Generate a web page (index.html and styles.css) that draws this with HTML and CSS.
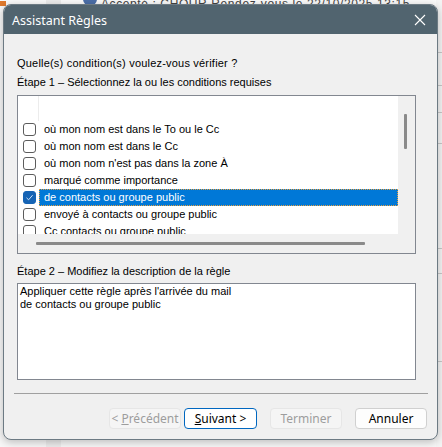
FILE: index.html
```html
<!DOCTYPE html>
<html lang="fr">
<head>
<meta charset="utf-8">
<title>Assistant Règles</title>
<link rel="stylesheet" href="styles.css">
</head>
<body>
<div class="desktop">
  <div class="behind">
    <div class="behind-top">
      <span class="orange-ico"></span>
      <span class="gray-col"></span>
      <span class="blue-ico"></span>
      <span class="behind-text">Accepté : CHOUR Rendez-vous le 22/10/2025 13:15</span>
    </div>
    <div class="behind-right">
      <span class="rl l1"></span><span class="rl l2"></span><span class="rl l3"></span><span class="rl l4"></span><span class="rl l5"></span><span class="rl l6"></span><span class="rl l7"></span>
    </div>
  </div>

  <div class="dialog">
    <div class="titlebar">
      <span class="title">Assistant Règles</span>
      <svg class="close" width="12" height="12" viewBox="0 0 12 12"><path d="M1 1L11 11M11 1L1 11" stroke="#ffffff" stroke-width="1.1" fill="none"/></svg>
    </div>
    <div class="content">
      <p class="question">Quelle(s) condition(s) voulez-vous vérifier ?</p>
      <p class="step">Étape 1 – Sélectionnez la ou les conditions requises</p>
      <div class="listbox">
        <div class="list-main">
          <div class="rows">
            <div class="blank-row"><span class="col-line"></span></div>
            <div class="row"><span class="cb"></span><span class="lbl">où mon nom est dans le To ou le Cc</span></div>
            <div class="row"><span class="cb"></span><span class="lbl">où mon nom est dans le Cc</span></div>
            <div class="row"><span class="cb"></span><span class="lbl">où mon nom n'est pas dans la zone À</span></div>
            <div class="row"><span class="cb"></span><span class="lbl">marqué comme importance</span></div>
            <div class="row selected"><span class="cb checked"><svg width="9" height="9" viewBox="0 0 9 9"><path d="M1.5 4.8L3.6 6.8L7.6 2.2" stroke="#cfe3f7" stroke-width="1" fill="none"/></svg></span><span class="lbl">de contacts ou groupe public</span></div>
            <div class="row"><span class="cb"></span><span class="lbl">envoyé à contacts ou groupe public</span></div>
            <div class="row"><span class="cb"></span><span class="lbl">Cc contacts ou groupe public</span></div>
          </div>
          <div class="vscroll"><span class="vthumb"></span></div>
        </div>
        <div class="hscroll"><span class="hthumb"></span></div>
      </div>
      <p class="step step2">Étape 2 – Modifiez la description de la règle</p>
      <div class="desc">
        <div>Appliquer cette règle après l'arrivée du mail</div>
        <div>de contacts ou groupe public</div>
      </div>
    </div>
    <div class="sep"></div>
    <div class="buttons">
      <button class="btn disabled" type="button">&lt; <u>P</u>récédent</button>
      <button class="btn default" type="button"><u>S</u>uivant &gt;</button>
      <button class="btn disabled gap" type="button">Terminer</button>
      <button class="btn gap" type="button">Annuler</button>
    </div>
  </div>
</div>
</body>
</html>
```

FILE: styles.css
```css
* { box-sizing: border-box; }
html, body { margin: 0; padding: 0; }
body {
  width: 442px;
  height: 447px;
  overflow: hidden;
  background: #f7f7f7;
  font-family: "Liberation Sans", Arial, sans-serif;
}
.desktop {
  position: relative;
  width: 442px;
  height: 447px;
  padding: 4px 0 0 3px;
}
.behind {
  position: absolute;
  left: 0; top: 0;
  width: 442px; height: 447px;
}
.behind-top {
  position: absolute;
  left: 0; top: 0;
  width: 442px; height: 12px;
  background: #fafafa;
}
.orange-ico {
  position: absolute; left: 0; top: 1px;
  width: 6px; height: 5px;
  background: #e07a2e;
}
.gray-col {
  position: absolute; left: 46px; top: 0;
  width: 15px; height: 447px;
  background: #ececec;
}
.blue-ico {
  position: absolute; left: 83px; top: -8px;
  width: 14px; height: 14px;
  border-radius: 50%;
  background: #4a6ea8;
}
.behind-text {
  position: absolute; left: 101px; top: -3px;
  font-size: 12px;
  color: #444;
  white-space: nowrap;
  letter-spacing: 0.6px;
}
.behind-right {
  position: absolute;
  left: 436px; top: 0;
  width: 6px; height: 447px;
  background: #f4f4f4;
}
.rl { position: absolute; left: 0; width: 6px; height: 1px; background: #c8c8c8; }
.l1 { top: 52px; } .l2 { top: 85px; } .l3 { top: 112px; } .l4 { top: 143px; }
.l5 { top: 248px; } .l6 { top: 273px; } .l7 { top: 361px; }

.dialog {
  position: relative;
  width: 435px;
  height: 436px;
  background: #f0f0f0;
  border: 1px solid #6c7a83;
  border-radius: 8px;
  overflow: hidden;
  box-shadow: 0 2px 8px rgba(0,0,0,0.25);
  display: flex;
  flex-direction: column;
}
.titlebar {
  height: 29px;
  background: #51646f;
  display: flex;
  align-items: center;
  justify-content: space-between;
  padding: 0 11px 0 8px;
  flex: none;
}
.title {
  color: #ffffff;
  font-family: "Noto Sans", "Open Sans", sans-serif;
  font-size: 12.5px;
  padding-top: 1px;
}
.close { display: block; margin-top: 0; }

.content {
  padding: 0 21px 0 13px;
  flex: none;
}
.question, .step {
  margin: 0;
  font-size: 11px;
  line-height: 13px;
  color: #000;
  white-space: nowrap;
}
.question { margin-top: 23px; letter-spacing: 0.2px; }
.step { margin-top: 6px; }

.listbox {
  margin-top: 6px;
  width: 399px;
  height: 159px;
  border: 1px solid #828790;
  background: #f0f0f0;
  display: flex;
  flex-direction: column;
}
.list-main {
  height: 138px;
  display: flex;
  flex: none;
}
.rows {
  width: 380px;
  background: #ffffff;
  overflow: hidden;
  flex: none;
}
.blank-row {
  height: 25px;
  position: relative;
}
.col-line {
  position: absolute;
  left: 20px; top: 0;
  width: 1px; height: 25px;
  background: #ececec;
}
.row {
  height: 17px;
  display: flex;
  align-items: center;
  font-size: 11px;
  white-space: nowrap;
}
.cb {
  width: 13px; height: 13px;
  margin-left: 5px;
  border: 1px solid #5c5c5c;
  border-radius: 3px;
  background: #ffffff;
  flex: none;
  display: flex;
  align-items: center;
  justify-content: center;
}
.cb.checked {
  background: #1664b5;
  border-color: #1664b5;
}
.cb svg { display: block; }
.lbl {
  height: 17px;
  line-height: 17px;
  margin-left: 3px;
  padding-left: 5px;
  flex: 1;
  color: #000;
}
.selected .lbl {
  background: #0078d7;
  color: #ffffff;
  outline: 1px dotted #e8a040;
  outline-offset: -1px;
}
.vscroll {
  flex: 1;
  background: #f0f0f0;
  position: relative;
}
.vthumb {
  position: absolute;
  left: 6px; top: 18px;
  width: 3px; height: 35px;
  background: #8a8a8a;
  border-radius: 1px;
}
.hscroll {
  flex: 1;
  position: relative;
  background: #f0f0f0;
}
.hthumb {
  position: absolute;
  left: 18px; top: 8px;
  width: 329px; height: 3px;
  background: #8a8a8a;
  border-radius: 1px;
}
.step2 { margin-top: 11px; }
.desc {
  margin-top: 5px;
  width: 399px;
  height: 97px;
  border: 1px solid #828790;
  background: #ffffff;
  padding: 1px 0 0 2px;
  font-size: 11px;
  line-height: 13px;
  color: #000;
}
.sep {
  margin: 13px 0 0 10px;
  width: 414px;
  height: 1px;
  background: #a0a0a0;
  flex: none;
}
.buttons {
  display: flex;
  padding: 14px 0 0 105px;
  flex: none;
}
.btn {
  width: 72px;
  height: 21px;
  margin: 0 3px 0 0;
  padding: 0;
  font-family: "Noto Sans", "Open Sans", sans-serif;
  font-size: 12px;
  color: #000;
  background: #fdfdfd;
  border: 1px solid #d0d0d0;
  border-radius: 4px;
}
.btn.default {
  border-color: #0067c0;
  background: #ffffff;
  width: 73px;
}
.btn.disabled {
  color: #9d9d9d;
  background: #f5f5f5;
  border-color: #e6e6e6;
}
.btn.gap { margin-left: 10px; }
.btn u { text-decoration: underline; text-underline-offset: 1px; }
```
